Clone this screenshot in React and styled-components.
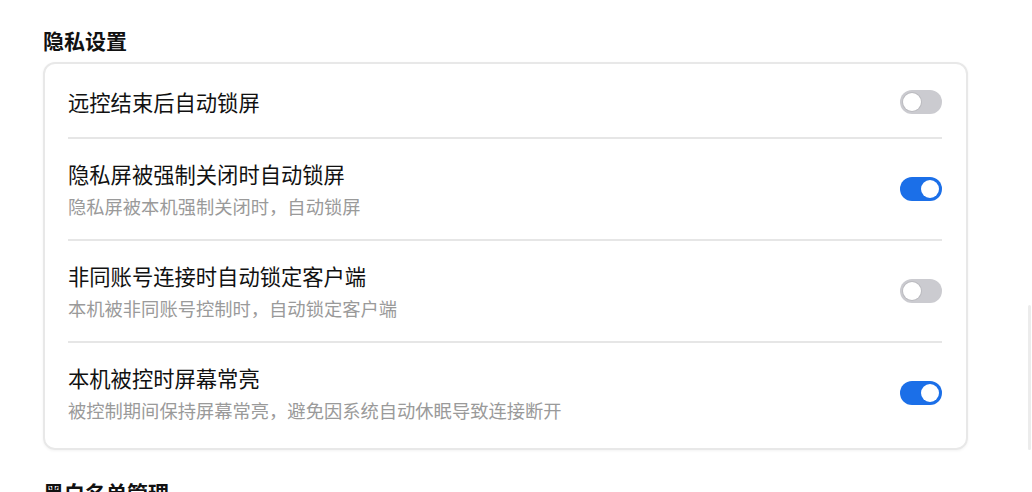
import React, { useState } from 'react';
import styled, { createGlobalStyle } from 'styled-components';

const GlobalStyle = createGlobalStyle`
  html, body {
    margin: 0;
    padding: 0;
    background: #ffffff;
    font-family: "Noto Sans CJK SC", "Noto Sans", sans-serif;
    overflow: hidden;
  }
`;

const Page = styled.main`
  padding: 26px 64px 0 43px;
  width: 925px;
`;

const SectionTitle = styled.h2`
  margin: 0 0 8px 0;
  font-size: 21px;
  line-height: 28px;
  font-weight: 700;
  color: #111111;
`;

const Card = styled.section`
  border: 2px solid #e8e8e8;
  border-radius: 12px;
  box-shadow: 0 1px 3px rgba(0, 0, 0, 0.05);
  padding: 0 24px 5px 23px;
  margin-bottom: 28px;
`;

const Row = styled.div`
  display: flex;
  align-items: center;
  justify-content: space-between;
  padding: ${p => (p.$first ? '23px 0 20px' : '20px 0')};
  border-bottom: ${p => (p.$last ? 'none' : '2px solid #e6e6e6')};
`;

const TextCol = styled.div`
  display: flex;
  flex-direction: column;
`;

const RowTitle = styled.div`
  font-size: 21.3px;
  line-height: 30px;
  color: #111111;
`;

const RowDesc = styled.div`
  margin-top: 4px;
  font-size: 18.3px;
  line-height: 26px;
  color: #9a9a9a;
`;

const Switch = styled.button`
  position: relative;
  flex: none;
  width: 42px;
  height: 24px;
  padding: 0;
  border: none;
  border-radius: 12px;
  background: ${p => (p.$on ? '#1b6fe8' : '#cbcbd0')};
  cursor: pointer;

  &::after {
    content: '';
    position: absolute;
    top: 3px;
    left: ${p => (p.$on ? '21px' : '3px')};
    width: 18px;
    height: 18px;
    border-radius: 50%;
    background: #ffffff;
    box-shadow: ${p => (p.$on ? 'none' : '0 0 0 1px rgba(0,0,0,0.08)')};
  }
`;

const ScrollThumb = styled.div`
  position: fixed;
  right: 1px;
  top: 305px;
  width: 3px;
  height: 145px;
  border-radius: 2px;
  background: #ececec;
`;

const items = [
  { title: '远控结束后自动锁屏', on: false },
  { title: '隐私屏被强制关闭时自动锁屏', desc: '隐私屏被本机强制关闭时，自动锁屏', on: true },
  { title: '非同账号连接时自动锁定客户端', desc: '本机被非同账号控制时，自动锁定客户端', on: false },
  { title: '本机被控时屏幕常亮', desc: '被控制期间保持屏幕常亮，避免因系统自动休眠导致连接断开', on: true },
];

const App = () => {
  const [states, setStates] = useState(items.map(i => i.on));
  const toggle = idx => setStates(s => s.map((v, i) => (i === idx ? !v : v)));

  return (
    <>
      <GlobalStyle />
      <Page>
        <SectionTitle>隐私设置</SectionTitle>
        <Card>
          {items.map((item, idx) => (
            <Row key={item.title} $first={idx === 0} $last={idx === items.length - 1}>
              <TextCol>
                <RowTitle>{item.title}</RowTitle>
                {item.desc && <RowDesc>{item.desc}</RowDesc>}
              </TextCol>
              <Switch $on={states[idx]} onClick={() => toggle(idx)} aria-label={item.title} />
            </Row>
          ))}
        </Card>
        <SectionTitle>黑白名单管理</SectionTitle>
      </Page>
      <ScrollThumb />
    </>
  );
};

export default App;
